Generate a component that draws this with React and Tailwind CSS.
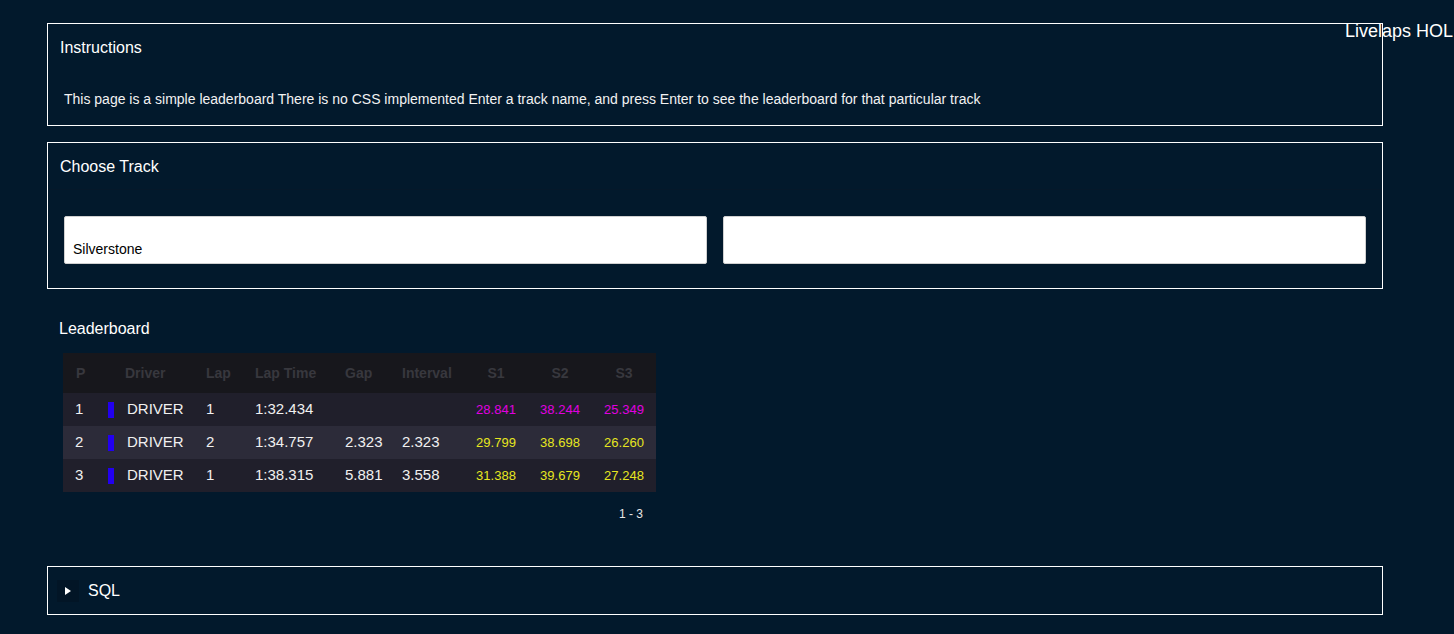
import React from "react";

const rows = [
  { p: 1, lap: 1, time: "1:32.434", gap: "", int: "", s: ["28.841", "38.244", "25.349"], purple: true, bg: "bg-[#201f2b]" },
  { p: 2, lap: 2, time: "1:34.757", gap: "2.323", int: "2.323", s: ["29.799", "38.698", "26.260"], purple: false, bg: "bg-[#2c2b39]" },
  { p: 3, lap: 1, time: "1:38.315", gap: "5.881", int: "3.558", s: ["31.388", "39.679", "27.248"], purple: false, bg: "bg-[#201f2b]" },
];

const grid = "grid grid-cols-[33px_17px_81px_49px_90px_57px_74px_64px_64px_64px] items-center";

export default function App() {
  return (
    <div className="relative min-h-screen overflow-hidden bg-[#02192c] text-white font-['Liberation_Sans',Arial,sans-serif]">
      <div className="absolute left-[1345px] top-[20px] whitespace-nowrap text-[18px] leading-[22px] text-white">
        Livelaps HOL
      </div>
      <div className="w-[1336px] ml-[47px] pt-[23px] flex flex-col">
        {/* Instructions */}
        <div className="h-[103px] border border-white px-3">
          <div className="h-[47px] flex items-center text-[16px]">Instructions</div>
          <div className="mt-[18px] pl-1 text-[14px] leading-5 text-[#f2f2f2]">
            This page is a simple leaderboard There is no CSS implemented Enter a track name, and press Enter to see the leaderboard for that particular track
          </div>
        </div>

        {/* Choose Track */}
        <div className="mt-4 h-[147px] border border-white flex flex-col">
          <div className="h-[47px] flex items-center px-3 pt-[2px] text-[16px] border-b border-[#05182a]">Choose Track</div>
          <div className="flex gap-4 px-4 pt-[26px]">
            <div className="w-[643px] h-12 bg-white rounded-[2px] border border-[#d0d0d0] flex items-end pb-[4px] pl-2 text-[14px] leading-5 text-black">
              Silverstone
            </div>
            <div className="w-[643px] h-12 bg-white rounded-[2px] border border-[#d0d0d0]"></div>
          </div>
        </div>

        {/* Leaderboard */}
        <div className="pl-3 mt-[30px]">
          <div className="text-[16px] leading-5 h-5">Leaderboard</div>
          <div className="mt-[14px] ml-1 w-[593px]">
            <div className={`${grid} h-10 bg-[#17171c] text-[14px] font-bold text-[#38383e]`}>
              <div className="pl-[13px]">P</div>
              <div></div>
              <div className="pl-3">Driver</div>
              <div className="pl-3">Lap</div>
              <div className="pl-3">Lap Time</div>
              <div className="pl-3">Gap</div>
              <div className="pl-3">Interval</div>
              <div className="text-center">S1</div>
              <div className="text-center">S2</div>
              <div className="text-center">S3</div>
            </div>
            {rows.map((r) => (
              <div key={r.p} className={`${grid} h-[33px] ${r.bg} text-[15px] text-[#f0f0f0]`}>
                <div className="pl-[12px]">{r.p}</div>
                <div className="pl-3"><div className="w-[6px] h-4 bg-[#2200f0]"></div></div>
                <div className="pl-[14px]">DRIVER</div>
                <div className="pl-3">{r.lap}</div>
                <div className="pl-3">{r.time}</div>
                <div className="pl-3">{r.gap}</div>
                <div className="pl-3">{r.int}</div>
                {r.s.map((v, i) => (
                  <div key={i} className={`text-center text-[13px] ${r.purple ? "text-[#e000e0]" : "text-[#e6e620]"}`}>{v}</div>
                ))}
              </div>
            ))}
            <div className="flex justify-end pr-[13px] mt-[14px] text-[12px] leading-4 text-[#e6e6e6]">1 - 3</div>
          </div>
        </div>

        {/* SQL */}
        <div className="mt-[44px] h-[49px] border border-white flex items-center pl-[9px]">
          <div className="w-[22px] h-[22px] bg-[#021526] flex items-center justify-center">
            <svg width="6" height="8" viewBox="0 0 6 8"><path d="M0 0 L6 4 L0 8 Z" fill="white" /></svg>
          </div>
          <div className="ml-[9px] text-[16px]">SQL</div>
        </div>
      </div>
    </div>
  );
}
